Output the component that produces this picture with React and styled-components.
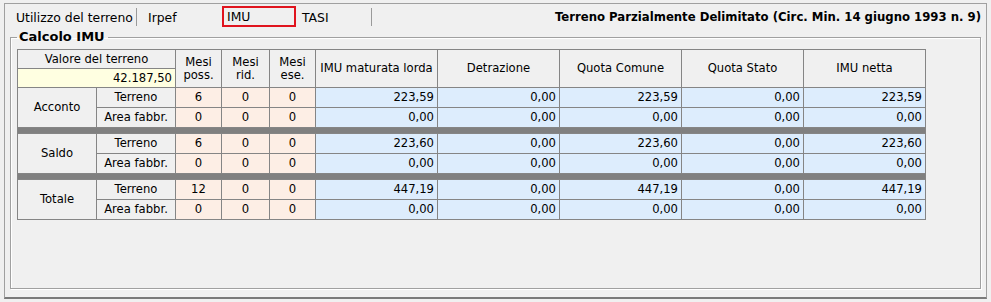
import React from 'react';
import styled, { createGlobalStyle } from 'styled-components';

const GlobalStyle = createGlobalStyle`
  html, body {
    margin: 0;
    padding: 0;
    background: #f0f0f0;
  }
  body {
    font-family: 'DejaVu Sans', Verdana, sans-serif;
    color: #000;
  }
`;

// Finestra principale
const Window = styled.div`
  width: 991px;
  height: 302px;
  box-sizing: border-box;
  padding: 3px 4px 3px 4px;
  background: #f0f0f0;
`;

const Panel = styled.div`
  height: 100%;
  box-sizing: border-box;
  border: 1px solid #a0a0a0;
  border-bottom: 2px solid #7a7a7a;
  display: flex;
  flex-direction: column;
`;

// Barra delle schede
const TabBar = styled.div`
  height: 25px;
  display: flex;
  align-items: center;
`;

const Tab = styled.div`
  box-sizing: border-box;
  width: ${({ w }) => w}px;
  height: ${({ active }) => (active ? 21 : 18)}px;
  padding-left: ${({ pad }) => pad}px;
  font-size: 12.4px;
  line-height: 17px;
  display: flex;
  align-items: center;
  border-right: ${({ sep }) => (sep ? '1px solid #9a9a9a' : 'none')};
  border: ${({ active }) => (active ? '2px solid #e0141e' : undefined)};
  margin-top: ${({ active }) => (active ? 0 : 1)}px;
`;

const PageTitle = styled.div`
  margin-left: auto;
  padding-right: 5px;
  font-weight: bold;
  font-size: 11.7px;
  white-space: nowrap;
`;

// Riquadro "Calcolo IMU"
const Group = styled.fieldset`
  flex: 1;
  margin: 0 5px 8px 5px;
  padding: 4px 6px 0 6px;
  border: 1px solid #a0a0a0;
  box-shadow: inset 1px 1px 0 #fff, 1px 1px 0 #fff;
  min-width: 0;
`;

const Legend = styled.legend`
  font-weight: bold;
  font-size: 13px;
  line-height: 16px;
  padding: 0 3px 0 2px;
  margin-left: 0;
`;

const Grid = styled.div`
  display: grid;
  width: 909px;
  box-sizing: border-box;
  grid-template-columns: 78px 78px 45px 47px 45px repeat(5, 121px);
  grid-template-rows: 18px 18px 19px 19px 5px 19px 19px 5px 19px 19px;
  gap: 1px;
  padding: 1px;
  background: #858585;
  font-size: 11.6px;
`;

const bg = {
  head: '#f0f0f0',
  label: '#f0f0f0',
  mesi: '#fdeee5',
  imp: '#ddedfd',
  valore: '#ffffe1',
};

const Cell = styled.div`
  background: ${({ kind }) => bg[kind]};
  display: flex;
  align-items: center;
  justify-content: ${({ right }) => (right ? 'flex-end' : 'center')};
  text-align: center;
  padding-right: ${({ right }) => (right ? 3 : 0)}px;
  line-height: 13px;
  grid-column: ${({ cs }) => (cs ? `span ${cs}` : 'auto')};
  grid-row: ${({ rs }) => (rs ? `span ${rs}` : 'auto')};
  white-space: nowrap;
  overflow: hidden;
`;

const Separator = styled.div`
  grid-column: 1 / -1;
  background: #808080;
`;

const gruppi = [
  {
    nome: 'Acconto',
    righe: [
      { tipo: 'Terreno', mesi: [6, 0, 0], importi: ['223,59', '0,00', '223,59', '0,00', '223,59'] },
      { tipo: 'Area fabbr.', mesi: [0, 0, 0], importi: ['0,00', '0,00', '0,00', '0,00', '0,00'] },
    ],
  },
  {
    nome: 'Saldo',
    righe: [
      { tipo: 'Terreno', mesi: [6, 0, 0], importi: ['223,60', '0,00', '223,60', '0,00', '223,60'] },
      { tipo: 'Area fabbr.', mesi: [0, 0, 0], importi: ['0,00', '0,00', '0,00', '0,00', '0,00'] },
    ],
  },
  {
    nome: 'Totale',
    righe: [
      { tipo: 'Terreno', mesi: [12, 0, 0], importi: ['447,19', '0,00', '447,19', '0,00', '447,19'] },
      { tipo: 'Area fabbr.', mesi: [0, 0, 0], importi: ['0,00', '0,00', '0,00', '0,00', '0,00'] },
    ],
  },
];

const intestazioni = ['IMU maturata lorda', 'Detrazione', 'Quota Comune', 'Quota Stato', 'IMU netta'];

const App = () => {
  return (
    <Window>
      <GlobalStyle />
      <Panel>
        <TabBar>
          <Tab w={132} pad={11} sep>Utilizzo del terreno</Tab>
          <Tab w={85} pad={11}>Irpef</Tab>
          <Tab w={74} pad={3} active>IMU</Tab>
          <Tab w={76} pad={6} sep>TASI</Tab>
          <PageTitle>Terreno Parzialmente Delimitato (Circ. Min. 14 giugno 1993 n. 9)</PageTitle>
        </TabBar>

        <Group>
          <Legend>Calcolo IMU</Legend>
          <Grid>
            <Cell kind="head" cs={2}>Valore del terreno</Cell>
            <Cell kind="head" rs={2}>Mesi<br />poss.</Cell>
            <Cell kind="head" rs={2}>Mesi<br />rid.</Cell>
            <Cell kind="head" rs={2}>Mesi<br />ese.</Cell>
            {intestazioni.map((t) => (
              <Cell key={t} kind="head" rs={2}>{t}</Cell>
            ))}
            <Cell kind="valore" cs={2} right>42.187,50</Cell>

            {gruppi.map((g, gi) => (
              <React.Fragment key={g.nome}>
                {gi > 0 && <Separator />}
                <Cell kind="label" rs={2}>{g.nome}</Cell>
                {g.righe.map((r) => (
                  <React.Fragment key={r.tipo}>
                    <Cell kind="label">{r.tipo}</Cell>
                    {r.mesi.map((m, i) => (
                      <Cell key={`m${i}`} kind="mesi">{m}</Cell>
                    ))}
                    {r.importi.map((v, i) => (
                      <Cell key={`v${i}`} kind="imp" right>{v}</Cell>
                    ))}
                  </React.Fragment>
                ))}
              </React.Fragment>
            ))}
          </Grid>
        </Group>
      </Panel>
    </Window>
  );
};

export default App;
